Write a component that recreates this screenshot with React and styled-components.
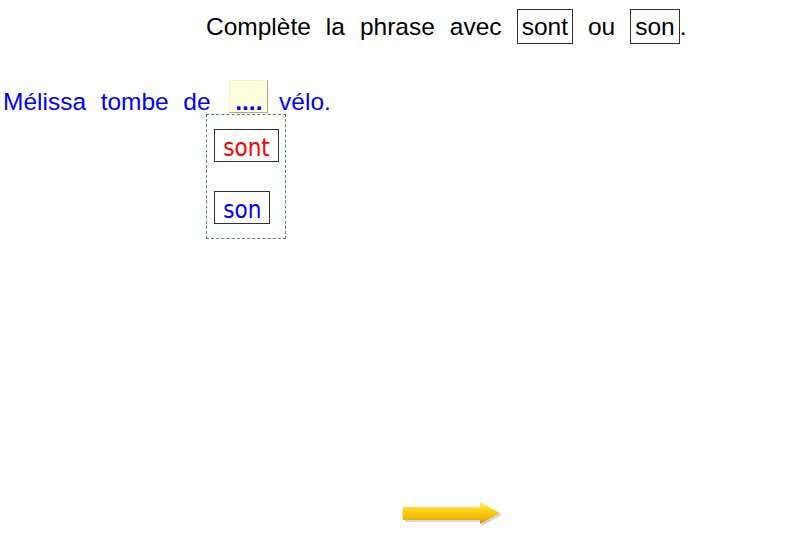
import React from 'react'
import styled, { createGlobalStyle } from 'styled-components'

const GlobalStyle = createGlobalStyle`
  html, body {
    margin: 0;
    padding: 0;
    background: #ffffff;
    font-family: "Liberation Sans", Arial, sans-serif;
  }
`

const Page = styled.div`
  width: 800px;
  height: 535px;
  display: flex;
  flex-direction: column;
  overflow: hidden;
`

const Title = styled.div`
  padding: 9px 0 0 206px;
  font-size: 24.5px;
  line-height: 33px;
  word-spacing: 8.2px;
  color: #000;
  white-space: nowrap;
`

const WordBox = styled.span`
  display: inline-block;
  border: 1px solid #333;
  padding: 0 4px;
  line-height: 33px;
  word-spacing: 0;
`

const Sentence = styled.div`
  margin-top: 36px;
  padding-left: 3px;
  font-size: 24.5px;
  line-height: 33px;
  word-spacing: 7.8px;
  color: #0000ff;
  white-space: nowrap;
`

const Blank = styled.span`
  position: relative;
  display: inline-block;
  margin: 0 -4px 0 4px;
  padding: 8px 5px 0;
  height: 33px;
  box-sizing: border-box;
  line-height: 25px;
  background: #ffffe0;
  border: 1px solid #f3efcf;
  border-right-color: #aaa793;
  border-bottom-color: #aaa793;
  font-weight: bold;
  color: #0000ff;
  word-spacing: 0;
`

const Choices = styled.div`
  position: absolute;
  top: calc(100% + 2px);
  left: -24px;
  width: 80px;
  box-sizing: border-box;
  padding: 14px 7px;
  border: 1px dashed #4d8a4d;
  display: flex;
  flex-direction: column;
  align-items: flex-start;
  gap: 29px;
  background: #fff;
  font-weight: normal;
  line-height: normal;
`

const Choice = styled.span`
  display: block;
  height: 33px;
  box-sizing: border-box;
  padding: 5px 8px 0;
  line-height: 27px;
  border: 1px solid #333;
  font-family: "DejaVu Sans Condensed", "DejaVu Sans", sans-serif;
  font-stretch: condensed;
  font-size: 24px;
  color: ${({ $color }) => $color};
`

const ArrowRow = styled.div`
  margin-top: auto;
  padding: 0 0 9px 401px;
  line-height: 0;
`

const NextArrow = () => (
  <svg width="101" height="25" viewBox="0 0 101 25">
    <defs>
      <linearGradient id="arrowFill" x1="0" y1="0" x2="0" y2="1">
        <stop offset="0" stopColor="#fff07a" />
        <stop offset="0.35" stopColor="#ffd21a" />
        <stop offset="0.75" stopColor="#f0b800" />
        <stop offset="1" stopColor="#b88a00" />
      </linearGradient>
    </defs>
    <path
      d="M3 7 L80 7 L80 2 L100 13 L80 24 L80 20 L3 20 Z"
      fill="#8a86a0"
      opacity="0.35"
      transform="translate(1 1)"
    />
    <path d="M2 6 L79 6 L79 1 L99 12 L79 23 L79 19 L2 19 Q1 12.5 2 6 Z" fill="url(#arrowFill)" />
  </svg>
)

export default function App() {
  return (
    <>
      <GlobalStyle />
      <Page>
        <Title>
          Complète la phrase avec <WordBox>sont</WordBox> ou <WordBox>son</WordBox>.
        </Title>
        <Sentence>
          Mélissa tombe de{' '}
          <Blank>
            ....
            <Choices>
              <Choice $color="#ff0000">sont</Choice>
              <Choice $color="#0000ff">son</Choice>
            </Choices>
          </Blank>{' '}
          vélo.
        </Sentence>
        <ArrowRow>
          <NextArrow />
        </ArrowRow>
      </Page>
    </>
  )
}
